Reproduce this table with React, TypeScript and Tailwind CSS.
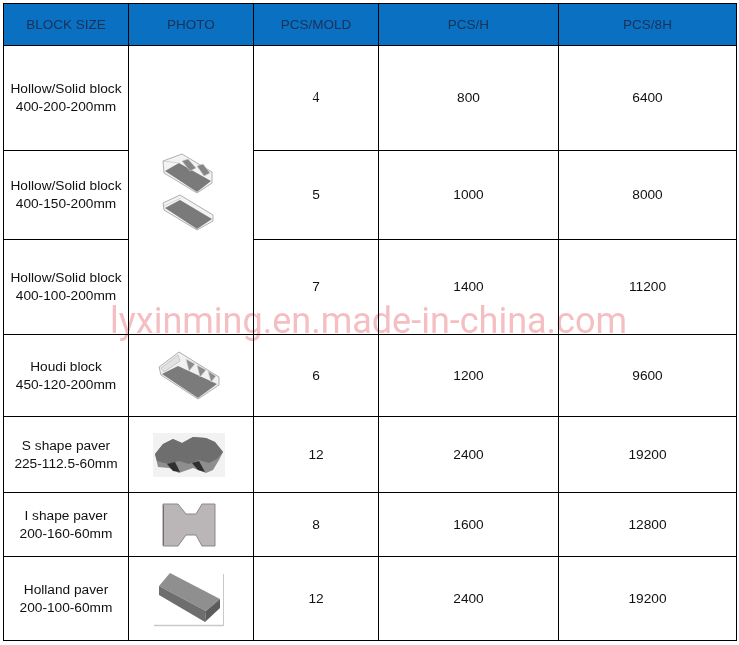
import React from "react";

type Row = {
  size: [string, string];
  mold: string;
  perHour: string;
  perShift: string;
  photo?: React.ReactNode;
  serif?: boolean;
};

// hollow + solid block pair (one picture for the first three rows)
function HollowSolid() {
  return (
    <svg width="54" height="80" viewBox="0 0 54 80">
      <polygon points="2,9 21,2 51,20 51,31 36,41 3,21" fill="#f3f3f3" stroke="#9c9c9c" strokeWidth="0.8" />
      <polygon points="4,19 18,11 50,29 36,40" fill="#7a7a7a" />
      <polygon points="21,9 27,7 35,16 29,19" fill="#858585" stroke="#d0d0d0" strokeWidth="0.6" />
      <polygon points="36,14 42,12 49,21 43,24" fill="#858585" stroke="#d0d0d0" strokeWidth="0.6" />
      <line x1="2" y1="9" x2="18" y2="11" stroke="#bdbdbd" strokeWidth="0.6" />
      <polygon points="2,51 19,43 52,63 52,69 36,78 3,58" fill="#f3f3f3" stroke="#9c9c9c" strokeWidth="0.8" />
      <polygon points="4,56 19,48 51,67 36,77" fill="#7a7a7a" />
      <line x1="3" y1="54" x2="20" y2="46" stroke="#c4c4c4" strokeWidth="0.6" />
    </svg>
  );
}

function Houdi() {
  return (
    <svg width="62" height="50" viewBox="0 0 62 50">
      <polygon points="1,16 21,1 61,26 61,34 40,48 3,24" fill="#f1f1f1" stroke="#9a9a9a" strokeWidth="0.8" />
      <polygon points="4,23 20,15 59,33 40,47" fill="#7b7b7b" />
      <polygon points="3,17 20,4 22,10 6,21" fill="#e2e2e2" stroke="#b0b0b0" strokeWidth="0.6" />
      <polygon points="28,8 37,13 31,20" fill="#8c8c8c" stroke="#d8d8d8" strokeWidth="0.6" />
      <polygon points="39,14 48,19 42,26" fill="#8c8c8c" stroke="#d8d8d8" strokeWidth="0.6" />
      <polygon points="50,20 58,25 53,31" fill="#8c8c8c" stroke="#d8d8d8" strokeWidth="0.6" />
    </svg>
  );
}

function SPaver() {
  return (
    <svg width="72" height="44" viewBox="0 0 72 44">
      <rect x="0" y="0" width="72" height="44" fill="#f2f2f2" />
      <polygon points="2,21 10,11 20,6 29,10 40,4 53,5 62,9 70,19 66,27 60,37 53,40 40,35 26,40 16,35 5,34" fill="#8e8e8e" />
      <polygon points="2,21 10,11 20,6 29,10 40,4 53,5 62,9 70,19 64,26 56,30 46,27 36,31 26,28 15,31 4,28" fill="#6e6e6e" />
      <polygon points="14,31 22,29 27,39 20,38" fill="#2f2f2f" />
      <polygon points="39,30 46,28 52,39 45,37" fill="#2f2f2f" />
    </svg>
  );
}

function IPaver() {
  return (
    <svg width="54" height="44" viewBox="0 0 54 44">
      <polygon
        points="1,1 16,1 24,11 34,11 40,1 53,1 53,43 40,43 34,32 24,32 16,43 1,43"
        fill="#bab5b6"
        stroke="#8c8788"
        strokeWidth="1"
      />
      <line x1="1.5" y1="2" x2="1.5" y2="42" stroke="#6f6b6c" strokeWidth="1" />
    </svg>
  );
}

function HollandPaver() {
  return (
    <svg width="72" height="56" viewBox="0 0 72 56">
      <polygon points="17,2 67,28 53,40 6,15" fill="#8f8f8f" />
      <polygon points="6,15 53,40 52,51 6,24" fill="#6e6e6e" />
      <polygon points="53,40 67,28 67,37 52,51" fill="#5c5c5c" />
      <line x1="70.5" y1="3" x2="70.5" y2="55" stroke="#c9c9c9" strokeWidth="1" />
      <line x1="1" y1="54.5" x2="70" y2="54.5" stroke="#c9c9c9" strokeWidth="1.4" />
    </svg>
  );
}

const ROWS: Row[] = [
  { size: ["Hollow/Solid block", "400-200-200mm"], mold: "4", perHour: "800", perShift: "6400", serif: true },
  { size: ["Hollow/Solid block", "400-150-200mm"], mold: "5", perHour: "1000", perShift: "8000" },
  { size: ["Hollow/Solid block", "400-100-200mm"], mold: "7", perHour: "1400", perShift: "11200" },
  { size: ["Houdi block", "450-120-200mm"], mold: "6", perHour: "1200", perShift: "9600", photo: <Houdi /> },
  { size: ["S shape paver", "225-112.5-60mm"], mold: "12", perHour: "2400", perShift: "19200", photo: <SPaver /> },
  { size: ["I shape paver", "200-160-60mm"], mold: "8", perHour: "1600", perShift: "12800", photo: <IPaver /> },
  { size: ["Holland paver", "200-100-60mm"], mold: "12", perHour: "2400", perShift: "19200", photo: <HollandPaver /> },
];

const HEADERS = ["BLOCK SIZE", "PHOTO", "PCS/MOLD", "PCS/H", "PCS/8H"];

const cell = "flex items-center justify-center border-r border-b border-black text-center";

export default function App() {
  return (
    <div className="relative h-[645px] w-[739px] overflow-hidden bg-white font-['Liberation_Sans',Arial,sans-serif] text-[13.7px] leading-[18px] text-[#111]">
      <div className="ml-[3px] mt-[3px] grid w-max grid-cols-[125px_125px_125px_180px_178px] grid-rows-[42px_105px_89px_95px_82px_76px_64px_84px] border-l border-t border-black">
        {HEADERS.map(h => (
          <div key={h} className={`${cell} bg-[#0a70c2] text-[13.5px] text-[#1a3158]`}>
            {h}
          </div>
        ))}

        {ROWS.map((r, i) => (
          <React.Fragment key={i}>
            <div className={`${cell} flex-col`}>
              <span>{r.size[0]}</span>
              <span>{r.size[1]}</span>
            </div>
            {i === 0 && (
              <div className={`${cell} row-span-3 pr-[6px] pt-[4px]`}>
                <HollowSolid />
              </div>
            )}
            {r.photo && <div className={`${cell} pr-[4px]`}>{r.photo}</div>}
            <div className={`${cell} ${r.serif ? "font-['Liberation_Serif',serif]" : ""}`}>{r.mold}</div>
            <div className={cell}>{r.perHour}</div>
            <div className={cell}>{r.perShift}</div>
          </React.Fragment>
        ))}
      </div>

      {/* site watermark */}
      <div className="pointer-events-none absolute left-[110px] top-[303px] whitespace-nowrap font-['Roboto',sans-serif] text-[36px] leading-none text-[#f4bec2] mix-blend-multiply">
        lyxinming.en.made-in-china.com
      </div>
    </div>
  );
}
